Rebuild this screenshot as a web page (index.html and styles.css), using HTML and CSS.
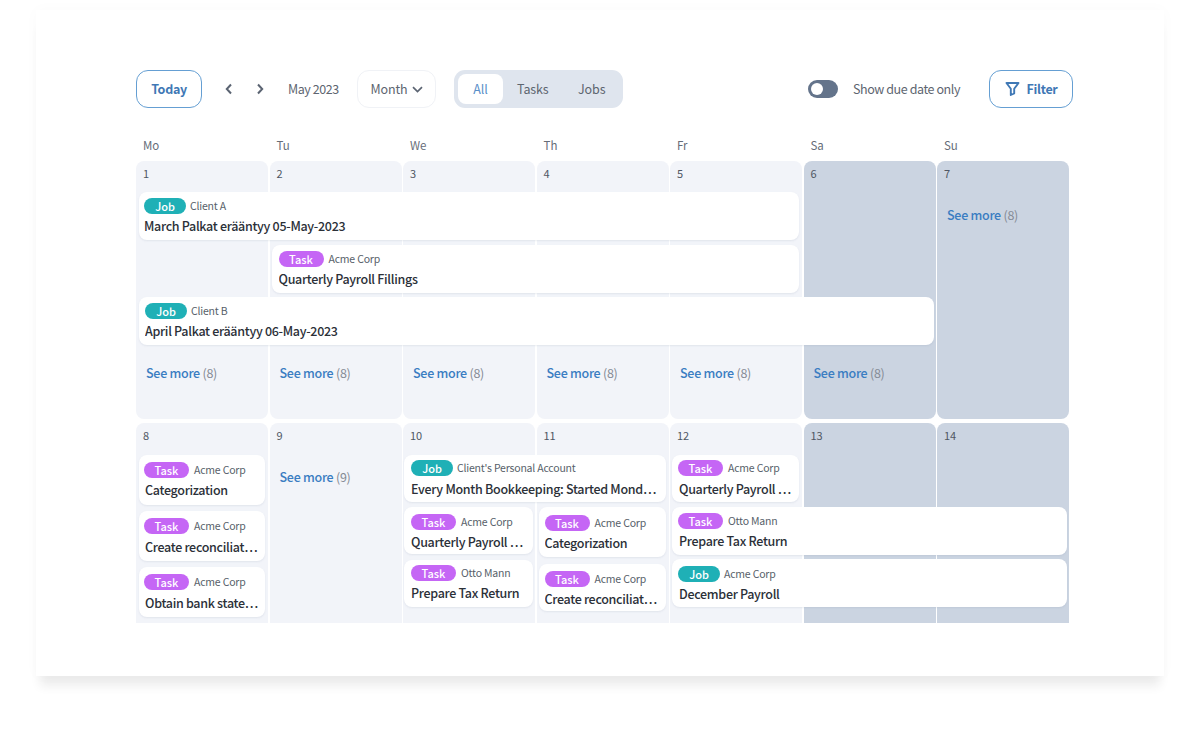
FILE: index.html
```html
<!DOCTYPE html>
<html lang="en">
<head>
<meta charset="utf-8">
<title>Calendar</title>
<link rel="stylesheet" href="styles.css">
</head>
<body>
<main class="panel">
  <header class="toolbar">
    <button class="btn-outline btn-today">Today</button>
    <button class="nav-btn nav-prev" aria-label="Previous"><svg width="10" height="12" viewBox="0 0 10 12"><path d="M7 1.5 2.8 6 7 10.500" /></svg></button>
    <button class="nav-btn nav-next" aria-label="Next"><svg width="10" height="12" viewBox="0 0 10 12"><path d="M3 1.500 7.200 6 3 10.500" /></svg></button>
    <span class="period">May 2023</span>
    <button class="select">Month<svg width="11" height="7" viewBox="0 0 11 7"><path d="M1 1.200 5.500 5.500 10 1.200" /></svg></button>
    <div class="segment">
      <span class="seg seg-active">All</span>
      <span class="seg seg-tasks">Tasks</span>
      <span class="seg seg-jobs">Jobs</span>
    </div>
    <span class="toggle"><span class="knob"></span></span>
    <span class="toggle-label">Show due date only</span>
    <button class="btn-outline btn-filter"><svg width="15" height="16" viewBox="0 0 15 16"><path d="M1.500 2H13.500L9.200 7.800V12.500L5.800 14V7.800Z" /></svg>Filter</button>
  </header>

  <div class="weekdays">
    <span>Mo</span><span>Tu</span><span>We</span><span>Th</span><span>Fr</span><span>Sa</span><span>Su</span>
  </div>

  <section class="week week-one">
    <div class="cell c1"><span class="date">1</span></div>
    <div class="cell c2"><span class="date">2</span></div>
    <div class="cell c3"><span class="date">3</span></div>
    <div class="cell c4"><span class="date">4</span></div>
    <div class="cell c5"><span class="date">5</span></div>
    <div class="cell c6 weekend"><span class="date">6</span></div>
    <div class="cell c7 weekend"><span class="date">7</span></div>

    <article class="event e-a">
      <div class="meta"><span class="chip job">Job</span><span class="who">Client A</span></div>
      <div class="title">March Palkat erääntyy 05-May-2023</div>
    </article>
    <article class="event e-b">
      <div class="meta"><span class="chip task">Task</span><span class="who">Acme Corp</span></div>
      <div class="title">Quarterly Payroll Fillings</div>
    </article>
    <article class="event e-c">
      <div class="meta"><span class="chip job">Job</span><span class="who">Client B</span></div>
      <div class="title">April Palkat erääntyy 06-May-2023</div>
    </article>

    <a class="more m1">See more <span>(8)</span></a>
    <a class="more m2">See more <span>(8)</span></a>
    <a class="more m3">See more <span>(8)</span></a>
    <a class="more m4">See more <span>(8)</span></a>
    <a class="more m5">See more <span>(8)</span></a>
    <a class="more m6">See more <span>(8)</span></a>
    <a class="more m7">See more <span>(8)</span></a>
  </section>

  <section class="week week-two">
    <div class="cell c1"><span class="date">8</span></div>
    <div class="cell c2"><span class="date">9</span></div>
    <div class="cell c3"><span class="date">10</span></div>
    <div class="cell c4"><span class="date">11</span></div>
    <div class="cell c5"><span class="date">12</span></div>
    <div class="cell c6 weekend"><span class="date">13</span></div>
    <div class="cell c7 weekend"><span class="date">14</span></div>

    <div class="stack s-mon">
      <article class="event tall">
        <div class="meta"><span class="chip task">Task</span><span class="who">Acme Corp</span></div>
        <div class="title">Categorization</div>
      </article>
      <article class="event tall">
        <div class="meta"><span class="chip task">Task</span><span class="who">Acme Corp</span></div>
        <div class="title">Create reconciliat…</div>
      </article>
      <article class="event tall">
        <div class="meta"><span class="chip task">Task</span><span class="who">Acme Corp</span></div>
        <div class="title">Obtain bank state…</div>
      </article>
    </div>

    <a class="more m-tue">See more <span>(9)</span></a>

    <article class="event short e-wide">
      <div class="meta"><span class="chip job">Job</span><span class="who">Client's Personal Account</span></div>
      <div class="title">Every Month Bookkeeping: Started Mond…</div>
    </article>

    <div class="stack s-wed">
      <article class="event short">
        <div class="meta"><span class="chip task">Task</span><span class="who">Acme Corp</span></div>
        <div class="title">Quarterly Payroll …</div>
      </article>
      <article class="event short">
        <div class="meta"><span class="chip task">Task</span><span class="who">Otto Mann</span></div>
        <div class="title">Prepare Tax Return</div>
      </article>
    </div>

    <div class="stack s-thu">
      <article class="event tall">
        <div class="meta"><span class="chip task">Task</span><span class="who">Acme Corp</span></div>
        <div class="title">Categorization</div>
      </article>
      <article class="event short">
        <div class="meta"><span class="chip task">Task</span><span class="who">Acme Corp</span></div>
        <div class="title">Create reconciliat…</div>
      </article>
    </div>

    <div class="stack s-fri">
      <article class="event short narrow">
        <div class="meta"><span class="chip task">Task</span><span class="who">Acme Corp</span></div>
        <div class="title">Quarterly Payroll …</div>
      </article>
      <article class="event short">
        <div class="meta"><span class="chip task">Task</span><span class="who">Otto Mann</span></div>
        <div class="title">Prepare Tax Return</div>
      </article>
      <article class="event short">
        <div class="meta"><span class="chip job">Job</span><span class="who">Acme Corp</span></div>
        <div class="title">December Payroll</div>
      </article>
    </div>
  </section>
</main>
</body>
</html>
```
FILE: styles.css
```css
* { box-sizing: border-box; }

html, body { margin: 0; padding: 0; height: 100%; background: #fff; overflow: hidden; }

body {
  font-family: "Noto Sans CJK KR", "Noto Sans", sans-serif;
  color: #2b3038;
}

.panel {
  width: 1128px;
  height: 666px;
  margin: 10px 36px 0;
  padding: 60px 0 0 100px;
  background: #fff;
  box-shadow: 0 14px 10px -4px rgba(0, 0, 0, .075), 0 0 14px rgba(0, 0, 0, .025);
}

button { font: inherit; background: none; border: 0; padding: 0; }

/* toolbar */
.toolbar { display: flex; align-items: center; height: 38px; }

.btn-outline {
  display: flex; align-items: center; justify-content: center;
  height: 38px;
  border: 1px solid #659fd3;
  border-radius: 12px;
  background: #fff;
  color: #3f78b5;
  font-size: 12.500px; font-weight: 700; line-height: 18px; letter-spacing: -.3px;
}
.btn-today { width: 66px; }
.btn-filter { width: 84px; gap: 7px; margin-left: 28px; }
.btn-filter svg { fill: none; stroke: #3f78b5; stroke-width: 1.900; stroke-linejoin: round; }

.nav-btn { display: flex; width: 10px; height: 12px; }
.nav-btn svg { fill: none; stroke: #5b6472; stroke-width: 2; }
.nav-prev { margin-left: 22px; }
.nav-next { margin-left: 21px; }

.period { margin-left: 23px; width: 51px; white-space: nowrap; font-size: 12.500px; letter-spacing: -.45px; line-height: 18px; color: #5d6570; }

.select {
  display: flex; align-items: center; justify-content: center; gap: 4px;
  width: 79px; height: 38px;
  margin-left: 18px;
  border: 1.500px solid #f0f2f6;
  border-radius: 12px;
  font-size: 12.500px; letter-spacing: -.1px; line-height: 18px; color: #5d6570;
}
.select svg { fill: none; stroke: #5b6472; stroke-width: 1.700; }

.segment {
  display: flex; align-items: center;
  width: 169px; height: 38px;
  margin-left: 18px; padding: 4px;
  border-radius: 11px;
  background: #dfe5ee;
}
.seg { font-size: 12.500px; letter-spacing: -.1px; line-height: 30px; color: #5d6570; }
.seg-active { width: 45px; text-align: center; border-radius: 8px; background: #fff; color: #5a8fc9; }
.seg-tasks { margin-left: 14px; width: 31px; }
.seg-jobs { margin-left: 30px; }

.toggle {
  display: flex; align-items: center;
  width: 30px; height: 18px;
  margin-left: 185px; padding-left: 3px;
  border-radius: 9px;
  background: #64748b;
}
.knob { width: 12px; height: 12px; border-radius: 50%; background: #fff; }
.toggle-label { margin-left: 15px; width: 108px; white-space: nowrap; font-size: 12.500px; letter-spacing: -.42px; line-height: 18px; color: #5d6570; }

/* calendar */
.weekdays, .week {
  display: grid;
  grid-template-columns: repeat(7, 132px);
  column-gap: 1.500px;
  width: 933px;
}
.weekdays { margin-top: 29px; height: 24px; font-size: 11.500px; line-height: 16px; color: #666d78; }
.weekdays span { padding-left: 7px; }

.week { overflow: hidden; }
.week-one { height: 258px; grid-template-rows: 31px 48px 5px 48px 4px 48px 1fr; }
.week-two { height: 200px; margin-top: 4px; grid-template-rows: 32px 52px 1fr; }

.cell { grid-row: 1 / -1; border-radius: 8px; background: #f2f4f9; padding: 5px 7px; }
.week-two .cell { border-radius: 8px 8px 0 0; }
.weekend { background: #cbd4e1; }
.date { display: block; font-size: 11px; line-height: 15px; color: #4f5763; }

.c1 { grid-column: 1; }
.c2 { grid-column: 2; }
.c3 { grid-column: 3; }
.c4 { grid-column: 4; }
.c5 { grid-column: 5; }
.c6 { grid-column: 6; }
.c7 { grid-column: 7; }

/* events */
.event {
  min-width: 0;
  padding: 6px 5px 0;
  border-radius: 8px;
  background: #fff;
  box-shadow: 0 1px 2px rgba(120, 135, 165, .14);
}
.meta { display: flex; align-items: center; gap: 4px; height: 16px; }
.chip {
  flex: none;
  height: 16px;
  border-radius: 8px;
  color: #fff;
  font-size: 11px; font-weight: 500; line-height: 16px; text-align: center;
}
.chip.job { width: 42px; background: #1fb0b6; }
.chip.task { width: 45px; background: #c566f5; margin-right: 1px; }
.who { font-size: 10.500px; letter-spacing: -.2px; line-height: 16px; color: #585f6a; white-space: nowrap; }
.title {
  margin-top: 3px;
  font-size: 12.500px; letter-spacing: -.3px; font-weight: 500; line-height: 18px;
  color: #2b3038;
  white-space: nowrap; overflow: hidden;
}

.e-a { grid-row: 2; grid-column: 1 / 6; margin: 0 3px; }
.e-b { grid-row: 4; grid-column: 2 / 6; margin: 0 3px 0 2px; padding-left: 7px; }
.e-c { grid-row: 6; grid-column: 1 / 7; margin: 0 2px 0 3px; padding-left: 6px; }

.more {
  display: block;
  font-size: 12.500px; letter-spacing: -.27px; font-weight: 500; line-height: 18px;
  color: #3a7dc2;
  padding-left: 10px;
}
.more span { font-weight: 400; color: #858b95; }
.m1, .m2, .m3, .m4, .m5, .m6 { grid-row: 7; margin-top: 19px; }
.m1 { grid-column: 1; }
.m2 { grid-column: 2; }
.m3 { grid-column: 3; }
.m4 { grid-column: 4; }
.m5 { grid-column: 5; }
.m6 { grid-column: 6; }
.m7 { grid-column: 7; grid-row: 2; margin-top: 14px; }
.m-tue { grid-column: 2; grid-row: 2; margin-top: 13px; }

.tall { height: 50px; padding-top: 7px; }
.short { height: 47px; padding-top: 5px; }
.short .title { margin-top: 4px; }

.stack { display: flex; flex-direction: column; min-width: 0; }

.s-mon { grid-column: 1; grid-row: 2 / -1; gap: 6px; padding: 0 3px; }
.s-mon .title { padding-left: 1px; }
.s-mon .event + .event .title { margin-top: 4px; }

.s-wed { grid-column: 3; grid-row: 3; gap: 6px; padding: 0 2px 0 1px; }
.s-wed .event { padding-left: 7px; padding-top: 7px; }
.s-wed .title { margin-top: 3px; }
.s-wed .event + .event { padding-top: 5px; }

.s-thu { grid-column: 4; grid-row: 3; gap: 7px; padding: 0 3px 0 2px; }
.s-thu .event { padding-left: 6px; padding-top: 8px; }
.s-thu .short { padding-top: 7px; }
.s-thu .short .title { margin-top: 3px; }

.s-fri { grid-column: 5 / 8; grid-row: 2 / -1; gap: 4px; padding: 0 2px; }
.s-fri .event { padding-left: 6px; height: 48px; padding-top: 6px; }
.s-fri .title { padding-left: 1px; }
.s-fri .event + .event .title { margin-top: 3px; }
.s-fri .event:last-child { padding-top: 7px; }
.s-fri .narrow { width: 127px; height: 47px; margin-bottom: 1px; padding-top: 5px; }

.e-wide { grid-column: 3 / 5; grid-row: 2; margin: 0 3px 0 1px; padding-left: 7px; }
```
